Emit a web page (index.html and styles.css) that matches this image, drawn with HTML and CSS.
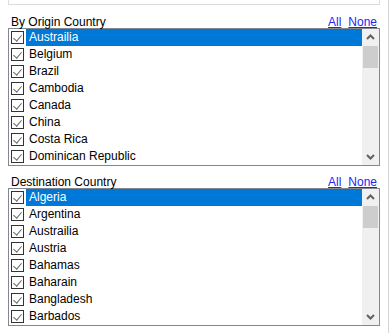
FILE: index.html
```html
<!DOCTYPE html>
<html lang="en">
<head>
    <meta charset="UTF-8">
    <title>Country Filter</title>
    <link rel="stylesheet" href="styles.css">
</head>
<body>
    <div class="frame">
        <div class="panel">
            <div class="top-box"></div>

            <!-- Origin -->
            <div class="section first">
                <div class="section-head">
                    <span class="label">By Origin Country</span>
                    <span class="links"><a href="#">All</a><a href="#">None</a></span>
                </div>
                <div class="listbox">
                    <ul class="items">
                        <li class="item selected"><span class="check"></span><span class="name">Austrailia</span></li>
                        <li class="item"><span class="check"></span><span class="name">Belgium</span></li>
                        <li class="item"><span class="check"></span><span class="name">Brazil</span></li>
                        <li class="item"><span class="check"></span><span class="name">Cambodia</span></li>
                        <li class="item"><span class="check"></span><span class="name">Canada</span></li>
                        <li class="item"><span class="check"></span><span class="name">China</span></li>
                        <li class="item"><span class="check"></span><span class="name">Costa Rica</span></li>
                        <li class="item"><span class="check"></span><span class="name">Dominican Republic</span></li>
                    </ul>
                    <div class="scrollbar">
                        <div class="arrow"><svg width="17" height="17" viewBox="0 0 17 17"><polyline points="5,10 8.5,6.5 12,10" fill="none" stroke="#606060" stroke-width="2"/></svg></div>
                        <div class="thumb"></div>
                        <div class="arrow down"><svg width="17" height="17" viewBox="0 0 17 17"><polyline points="5,7 8.5,10.5 12,7" fill="none" stroke="#606060" stroke-width="2"/></svg></div>
                    </div>
                </div>
            </div>

            <!-- Destination -->
            <div class="section">
                <div class="section-head">
                    <span class="label">Destination Country</span>
                    <span class="links"><a href="#">All</a><a href="#">None</a></span>
                </div>
                <div class="listbox">
                    <ul class="items">
                        <li class="item selected"><span class="check"></span><span class="name">Algeria</span></li>
                        <li class="item"><span class="check"></span><span class="name">Argentina</span></li>
                        <li class="item"><span class="check"></span><span class="name">Austrailia</span></li>
                        <li class="item"><span class="check"></span><span class="name">Austria</span></li>
                        <li class="item"><span class="check"></span><span class="name">Bahamas</span></li>
                        <li class="item"><span class="check"></span><span class="name">Baharain</span></li>
                        <li class="item"><span class="check"></span><span class="name">Bangladesh</span></li>
                        <li class="item"><span class="check"></span><span class="name">Barbados</span></li>
                    </ul>
                    <div class="scrollbar">
                        <div class="arrow"><svg width="17" height="17" viewBox="0 0 17 17"><polyline points="5,10 8.5,6.5 12,10" fill="none" stroke="#606060" stroke-width="2"/></svg></div>
                        <div class="thumb"></div>
                        <div class="arrow down"><svg width="17" height="17" viewBox="0 0 17 17"><polyline points="5,7 8.5,10.5 12,7" fill="none" stroke="#606060" stroke-width="2"/></svg></div>
                    </div>
                </div>
            </div>
        </div>
    </div>
</body>
</html>
```

FILE: styles.css
```css
* {
    margin: 0;
    padding: 0;
    box-sizing: border-box;
}

body {
    font-family: 'Liberation Sans', Arial, sans-serif;
    font-size: 12px;
    color: #000;
    background: #fff;
    width: 391px;
    height: 333px;
    overflow: hidden;
}

.frame {
    width: 389px;
    height: 333px;
    border-right: 1px solid #d4d4d4;
}

.panel {
    width: 372px;
    margin-left: 8px;
}

/* Box above, cut off by the top edge */
.top-box {
    height: 5px;
    border: 1px solid #dcdcdc;
    border-top: none;
}

.section {
    margin-top: 6px;
}

.section.first {
    margin-top: 7px;
}

/* text sits low, touching the list box */
.section-head {
    display: flex;
    justify-content: space-between;
    align-items: flex-start;
    height: 16px;
    line-height: 20px;
    padding: 0 3px;
}

.links {
    display: flex;
    gap: 7px;
}

.links a {
    color: #2424f0;
    text-decoration: underline;
}

/* List box */
.listbox {
    display: flex;
    border: 1px solid #828790;
    height: 138px;
}

.items {
    list-style: none;
    flex: 1;
}

.item {
    display: flex;
    align-items: center;
    height: 17px;
}

.check {
    position: relative;
    width: 13px;
    height: 13px;
    margin-left: 2px;
    border: 1px solid #333;
    background: #fff;
    flex-shrink: 0;
}

.check::after {
    content: "";
    position: absolute;
    left: 3px;
    top: 1px;
    width: 4px;
    height: 7px;
    border-right: 1px solid #6a6a6a;
    border-bottom: 1px solid #6a6a6a;
    transform: rotate(40deg);
}

.name {
    flex: 1;
    height: 17px;
    line-height: 17px;
    margin-left: 2px;
    padding-left: 3px;
}

.item.selected .name {
    background: #0078d7;
    color: #fff;
}

/* Scrollbar */
.scrollbar {
    width: 17px;
    display: flex;
    flex-direction: column;
    background: #f0f0f0;
}

.arrow {
    height: 17px;
}

.arrow svg {
    display: block;
}

.thumb {
    height: 22px;
    margin: 0 1px;
    background: #cdcdcd;
}

.arrow.down {
    margin-top: auto;
}
```
